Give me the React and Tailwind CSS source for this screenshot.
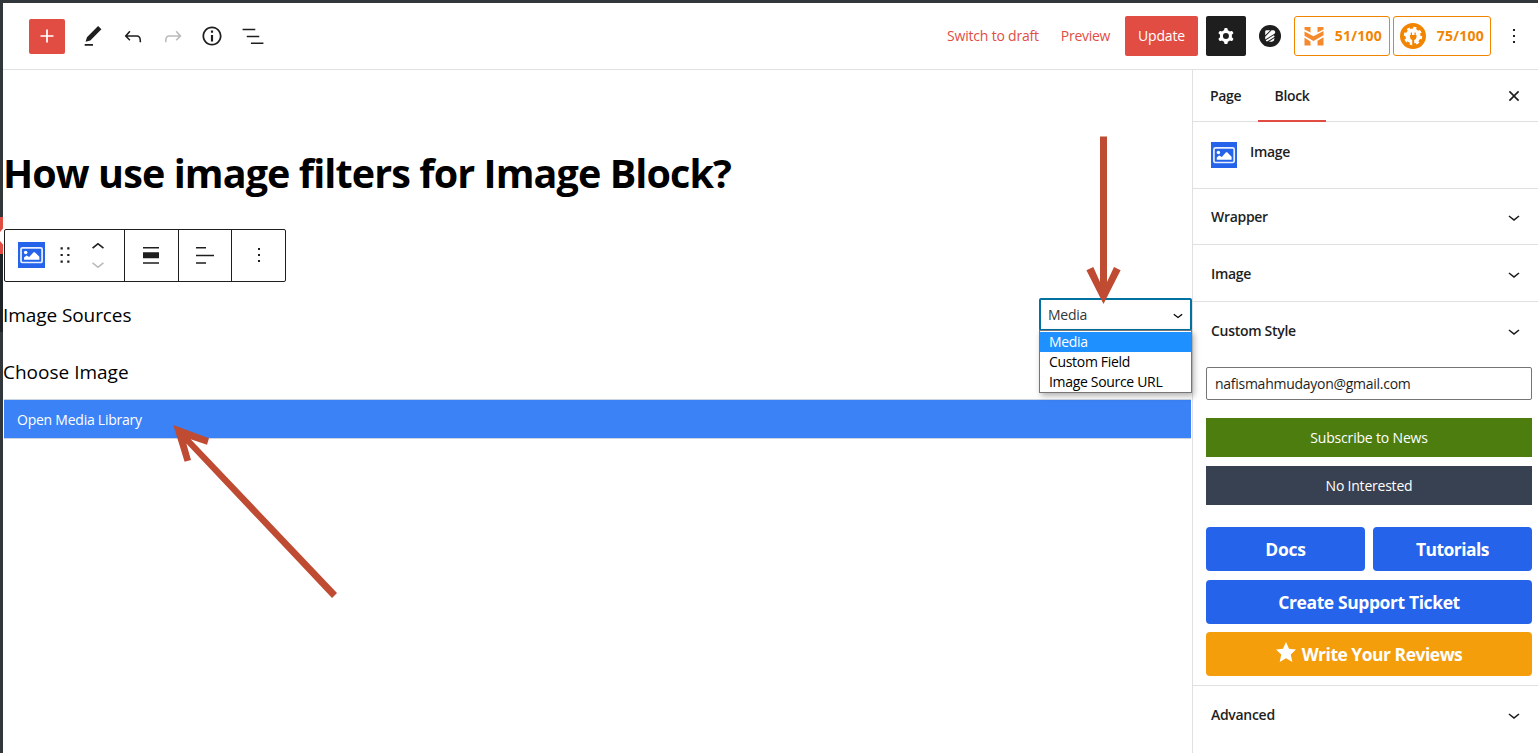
import React from "react";

const P = {
  plus: "M18 11.2h-5.2V6h-1.6v5.2H6v1.6h5.2V18h1.6v-5.2H18z",
  edit: "M20.1 5.1L16.9 2 6.2 12.7l-1.3 4.4 4.5-1.3L20.1 5.1zM4 20.8h8v-1.5H4v1.5z",
  undo: "M18.3 11.7c-.6-.6-1.4-.9-2.3-.9H6.7l2.9-3.3-1.1-1-4.5 5L8.5 16l1-1-2.7-2.7H16c.5 0 .9.2 1.3.5 1 1 1 3.4 1 4.5v.3h1.5v-.2c0-1.5 0-4.3-1.5-5.7z",
  redo: "M15.6 6.5l-1.1 1 2.9 3.3H8c-.9 0-1.7.3-2.3.9-1.4 1.5-1.4 4.2-1.4 5.6v.2h1.5v-.3c0-1.1 0-3.5 1-4.5.3-.3.7-.5 1.3-.5h9.2L14.5 15l1.1 1.1 4.6-4.6-4.6-5z",
  info: "M12 3.2c-4.8 0-8.8 3.9-8.8 8.8 0 4.8 3.9 8.8 8.8 8.8 4.8 0 8.8-3.9 8.8-8.8 0-4.8-4-8.8-8.8-8.8zm0 16c-4 0-7.2-3.3-7.2-7.2C4.8 8 8 4.8 12 4.8s7.2 3.3 7.2 7.2c0 4-3.2 7.2-7.2 7.2zM11 17h2v-6h-2v6zm0-8h2V7h-2v2z",
  list: "M14.2 4.500H2V6h12.200V4.500zM10 17.700v1.500h12v-1.500H10zm8-6.500H6v1.500h12v-1.500z",
  cog: "M10.289 4.836A1 1 0 0111.275 4h1.306a1 1 0 01.987.836l.244 1.466c.787.26 1.503.679 2.108 1.218l1.393-.522a1 1 0 011.216.437l.653 1.13a1 1 0 01-.23 1.273l-1.148.944a6.025 6.025 0 010 2.435l1.149.946a1 1 0 01.23 1.272l-.653 1.13a1 1 0 01-1.216.437l-1.394-.522c-.605.54-1.32.958-2.108 1.218l-.244 1.466a1 1 0 01-.987.836h-1.306a1 1 0 01-.986-.836l-.244-1.466a5.995 5.995 0 01-2.108-1.218l-1.394.522a1 1 0 01-1.217-.436l-.653-1.131a1 1 0 01.23-1.272l1.149-.946a6.026 6.026 0 010-2.435l-1.148-.944a1 1 0 01-.23-1.272l.653-1.131a1 1 0 011.217-.437l1.393.522a5.994 5.994 0 012.108-1.218l.244-1.466zM14.929 12a3 3 0 11-6 0 3 3 0 016 0z",
  more: "M13 19h-2v-2h2v2zm0-6h-2v-2h2v2zm0-6h-2V5h2v2z",
  close: "M12 13.06l3.712 3.713 1.061-1.06L13.061 12l3.712-3.712-1.06-1.06L12 10.938 8.288 7.227l-1.061 1.06L10.939 12l-3.712 3.712 1.06 1.061L12 13.061z",
  down: "M17.5 11.6L12 16l-5.500-4.400.9-1.200L12 14l4.500-3.600 1 1.200z",
  up: "M6.500 12.400L12 8l5.500 4.400-.9 1.200L12 10l-4.500 3.600-1-1.200z",
};

function Icon({ d, className = "size-6" }) {
  return (
    <svg viewBox="0 0 24 24" fill="currentColor" className={`shrink-0 ${className}`}>
      <path d={d} fillRule="evenodd" />
    </svg>
  );
}

function ImageBlockIcon({ className = "size-[26px]" }) {
  return (
    <svg viewBox="0 0 26 26" preserveAspectRatio="none" className={`shrink-0 ${className}`}>
      <rect width="26" height="26" fill="#2563eb" />
      <rect x="2.9" y="5.9" width="20.3" height="14.600" rx="1.600" fill="none" stroke="#e8effd" strokeWidth="1.700" />
      <circle cx="7.400" cy="10.500" r="1.700" fill="#fff" />
      <path d="M5.800 17.700v-2.200l2.400-2 2.600 1.500 4.200-4.800h1.200l4.400 4.500v3z" fill="#fff" />
    </svg>
  );
}

function T({ className = "", children }) {
  return <span className={`whitespace-nowrap ${className}`}>{children}</span>;
}

function PanelRow({ label, className }) {
  return (
    <div className={`flex items-center justify-between pl-[18px] pr-3 font-semibold tracking-[-0.3px] ${className}`}>
      <T>{label}</T>
      <Icon d={P.down} />
    </div>
  );
}

export default function App() {
  return (
    <div className="relative flex h-[753px] w-[1538px] flex-col overflow-hidden bg-white font-['Open_Sans','Noto_Sans',sans-serif] text-[14px] leading-5 text-[#1e1e1e]">
      <div className="h-[3px] shrink-0 bg-[#32373c]" />
      <div className="flex min-h-0 flex-1">
        <div className="flex w-[3px] shrink-0 flex-col bg-[#32373c] pt-[214px]">
          <svg viewBox="0 0 3 37" className="h-[37px] w-[3px]">
            <rect width="3" height="37" fill="#e14d43" />
            <path d="M3 11.500L0 15v9l3 3.500z" fill="#fff" />
          </svg>
          <div className="h-[78px] bg-[#1d2327]" />
        </div>

        <div className="flex min-w-0 flex-1 flex-col">
          <header className="flex h-[67px] shrink-0 items-center border-b border-[#e0e0e0] pl-[26px] pr-3">
            <div className="mr-2 grid h-[35px] w-9 place-items-center rounded-[2px] bg-[#e14d43] text-white">
              <Icon d={P.plus} className="size-[26px]" />
            </div>
            {[P.edit, P.undo, P.redo, P.info, P.list].map((d, i) => (
              <div key={i} className={`grid w-[39.8px] place-items-center ${i === 2 ? "text-[#bbb]" : ""}`}>
                <Icon d={d} className={i === 3 ? "size-[26px]" : "size-[25px] translate-x-[0.5px]"} />
              </div>
            ))}
            <div className="ml-auto flex items-center">
              <T className="mr-[22px] tracking-[-0.2px] text-[#e14d43]">Switch to draft</T>
              <T className="mr-[15px] tracking-[-0.3px] text-[#e14d43]">Preview</T>
              <div className="mr-2 grid h-10 w-[73px] place-items-center rounded-[2px] bg-[#e14d43] tracking-[-0.2px] text-white"><T>Update</T></div>
              <div className="mr-[13px] grid size-10 place-items-center rounded-[2px] bg-[#1e1e1e] text-white"><Icon d={P.cog} /></div>
              <svg viewBox="0 0 22 22" className="mr-[13px] size-[22px]">
                <circle cx="11" cy="11" r="11" fill="#1e1e1e" />
                <path d="M7.500 5.200h3.800L6.200 10.300V6.500a1.300 1.300 0 0 1 1.300-1.300zM12.600 5.200h1.600a2 2 0 0 1 1.300 3.500L6.200 14.500v-2.800zM6.800 15.300L14.800 10.200a2 2 0 0 1 .8 1.600L8 16.600a1.500 1.500 0 0 1-1.200-1.300zM9.800 16.700l5.600-3.600a3.300 3.300 0 0 1-2.700 3.600z" fill="#fff" />
              </svg>
              <div className="mr-[3px] flex h-10 w-24 items-center justify-between rounded-[3px] border border-[#f18500] pl-[9px] pr-[7px] font-bold tracking-[0.25px] text-[#f18500]">
                <svg viewBox="0 0 20 20" className="size-5" fill="#f5892d">
                  <path d="M.5 1h6v5.500L.5 3.500zM13.500 1h6v2.500l-6 3zM.5 5.500l9 4.800 10-5.200v4.200l-10 5.700-9-5.200zM.5 11.800l6 3.700v4h-6zM13.500 14.800l6-3.600v8.300h-6z" />
                </svg>
                <T>51/100</T>
              </div>
              <div className="mr-[11px] flex h-10 w-[98px] items-center justify-between rounded-[3px] border border-[#f18500] pl-1.5 pr-1.5 font-bold tracking-[0.25px] text-[#f18500]">
                <svg viewBox="0 0 26 26" className="size-[26px]">
                  <circle cx="13" cy="13" r="13" fill="#f18500" />
                  <circle cx="13" cy="13" r="7.600" fill="#fff" />
                  <circle cx="13" cy="13" r="8" fill="none" stroke="#fff" strokeWidth="2.400" strokeDasharray="3.140 3.140" />
                  <path d="M10 12h6.500v2a3.200 3.200 0 0 1-2.300 3V22h-2v-5a3.200 3.200 0 0 1-2.200-3zM10.800 9.500H12V12h-1.200zM14.500 9.500h1.200V12h-1.200z" fill="#f18500" />
                </svg>
                <T>75/100</T>
              </div>
              <Icon d={P.more} />
            </div>
          </header>

          <div className="flex min-h-0 flex-1">
            <main className="flex w-[1189px] shrink-0 flex-col text-black">
              <h1 className="mt-[75px] h-[56px] text-[39.5px] font-bold leading-[56px] tracking-[-0.91px]"><T>How use image filters for Image Block?</T></h1>
              <div className="ml-px mt-7 flex h-[53px] w-[282px] rounded-[2px] border border-[#1e1e1e] text-[#1e1e1e]">
                <div className="flex w-[120px] items-center border-r border-[#1e1e1e] pl-[13px]">
                  <ImageBlockIcon className="mb-px h-[26px] w-[27px]" />
                  <svg viewBox="0 0 18 18" className="mb-px ml-[9.5px] size-5" fill="currentColor">
                    <path d="M5 4h2V2H5v2zm6-2v2h2V2h-2zm-6 8h2V8H5v2zm6 0h2V8h-2v2zm-6 6h2v-2H5v2zm6 0h2v-2h-2v2z" />
                  </svg>
                  <div className="ml-[10px] flex flex-col">
                    <Icon d={P.up} className="-mb-[4px] h-[26px] w-[26px]" />
                    <Icon d={P.down} className="-mt-[5px] h-[26px] w-[26px] text-[#bbb]" />
                  </div>
                </div>
                <div className="grid w-[54px] place-items-center border-r border-[#1e1e1e] pr-px">
                  <svg viewBox="0 0 16 17" className="mb-px h-[17px] w-4" fill="currentColor"><path d="M0 0h16v1.500H0zM0 5.300h16v6H0zM0 15.300h16v1.500H0z" /></svg>
                </div>
                <div className="grid w-[53px] place-items-center border-r border-[#1e1e1e]">
                  <svg viewBox="0 0 18 17" className="mb-px h-[17px] w-[18px]" fill="currentColor"><path d="M0 0h10v1.500H0zM0 7.800h18v1.500H0zM0 15.300h10v1.500H0z" /></svg>
                </div>
                <div className="grid flex-1 place-items-center"><Icon d={P.more} className="mb-px size-6" /></div>
              </div>
              <div className="mt-4 flex h-[33px] items-center justify-between text-[19px]">
                <T className="tracking-[-0.08px]">Image Sources</T>
                <div className="relative h-[33px] w-[153px]">
                  <div className="flex h-[33px] items-center justify-between rounded-[2px] border-2 border-[#0071a1] bg-white pl-[7px] pr-[2px] text-[14px] text-[#32373c]">
                    <T className="tracking-[-0.25px]">Media</T>
                    <Icon d={P.down} className="size-5 text-black" />
                  </div>
                  <div className="absolute left-0 top-[32px] z-10 w-[153px] border border-[#767676] bg-white pt-px text-[14px] leading-5 tracking-[-0.32px] shadow-[2px_3px_6px_rgba(0,0,0,0.3)]">
                    <div className="h-5 bg-[#1e90ff] pl-[9px] text-white"><T>Media</T></div>
                    <div className="h-5 pl-[9px]"><T>Custom Field</T></div>
                    <div className="h-5 pl-[9px]"><T>Image Source URL</T></div>
                  </div>
                </div>
              </div>
              <div className="mt-[27px] text-[19px] leading-7"><T>Choose Image</T></div>
              <div className="ml-px mt-[13px] flex h-[40px] w-[1187px] items-center border-y border-[#cbd5e1] bg-[#3b82f6] pl-[13px] pt-0.5 tracking-[-0.24px] text-white"><T>Open Media Library</T></div>
            </main>

            <aside className="flex flex-1 flex-col border-l border-[#e0e0e0]">
              <div className="flex h-[52px] shrink-0 items-stretch border-b border-[#e0e0e0] pr-3 font-semibold tracking-[-0.35px]">
                <div className="flex w-[65px] items-center pl-[17px]"><T>Page</T></div>
                <div className="relative grid w-[68px] place-items-center"><T>Block</T><div className="absolute inset-x-0 -bottom-px h-[2px] bg-[#e14d43]" /></div>
                <Icon d={P.close} className="my-auto ml-auto size-[26px] translate-x-px" />
              </div>
              <div className="flex h-[67px] shrink-0 border-b border-[#e0e0e0] pl-[18px] pt-5 font-semibold tracking-[-0.3px]">
                <ImageBlockIcon />
                <T className="ml-[13px]">Image</T>
              </div>
              <PanelRow label="Wrapper" className="h-14 border-b border-[#e0e0e0]" />
              <PanelRow label="Image" className="h-[57px] border-b border-[#e0e0e0] pt-0.5" />
              <PanelRow label="Custom Style" className="h-[58px]" />
              <div className="flex flex-col pl-[13px] pr-1.5 pt-[7px] text-white">
                <div className="flex h-[33px] items-center rounded-[2px] border border-[#757575] pl-2 tracking-[-0.27px] text-[#1e1e1e]"><T>nafismahmudayon@gmail.com</T></div>
                <div className="mt-[18px] grid h-[39px] place-items-center bg-[#4d7c0f] tracking-[-0.18px]"><T>Subscribe to News</T></div>
                <div className="mt-[9px] grid h-[39px] place-items-center bg-[#374151] tracking-[-0.22px]"><T>No Interested</T></div>
                <div className="mt-[22px] grid grid-cols-2 gap-2 text-[17.5px] font-bold">
                  <div className="grid h-11 place-items-center rounded-[4px] bg-[#2563eb] tracking-[-0.25px]"><T>Docs</T></div>
                  <div className="grid h-11 place-items-center rounded-[4px] bg-[#2563eb] tracking-[-0.55px]"><T>Tutorials</T></div>
                </div>
                <div className="mt-[9px] grid h-11 place-items-center rounded-[4px] bg-[#2563eb] text-[17.5px] font-bold tracking-[-0.4px]"><T>Create Support Ticket</T></div>
                <div className="mt-2 flex h-11 items-center justify-center gap-[6px] rounded-[4px] bg-[#f59e0b] text-[17.5px] font-bold tracking-[-0.5px]">
                  <svg viewBox="0 0 20 20" className="mb-1 size-5" fill="#fff"><path d="M10 0l3 6.700 7 .8-5.200 4.900L16.300 20 10 16.200 3.700 20l1.500-7.600L0 7.500l7-.8z" /></svg>
                  <T>Write Your Reviews</T>
                </div>
              </div>
              <PanelRow label="Advanced" className="mt-[9px] h-[59px] border-t border-[#e0e0e0]" />
            </aside>
          </div>
        </div>
      </div>
      <svg viewBox="0 0 1538 753" className="pointer-events-none absolute inset-0 z-20 size-full" fill="#be4b32">
        <path d="M1100 136.500h7v145.500l7-15 6.600 3.200L1103.500 304l-17.100-33.800 6.900-3.200 6.700 15z" />
        <path d="M173.300 425L209 438.300l-2 6.500-16.300-5.600L337 593l-5 5L186.300 443.500l4.700 16.500-6.400 1.800z" />
      </svg>
    </div>
  );
}
